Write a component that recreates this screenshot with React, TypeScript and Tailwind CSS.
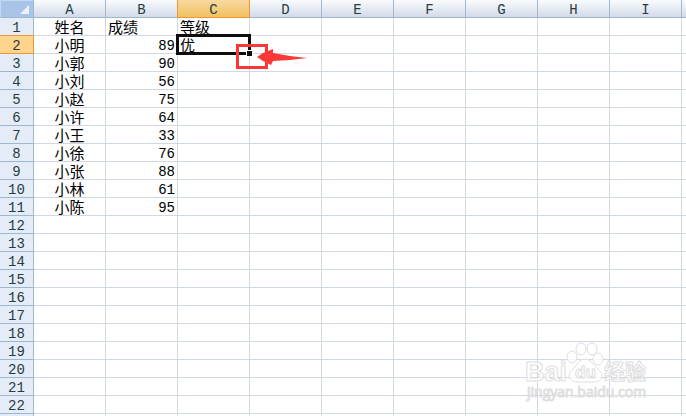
const columns = ["A", "B", "C", "D", "E", "F", "G", "H", "I", "J"];

const records: [string, string, string][] = [
  ["姓名", "成绩", "等级"],
  ["小明", "89", "优"],
  ["小郭", "90", ""],
  ["小刘", "56", ""],
  ["小赵", "75", ""],
  ["小许", "64", ""],
  ["小王", "33", ""],
  ["小徐", "76", ""],
  ["小张", "88", ""],
  ["小林", "61", ""],
  ["小陈", "95", ""],
];

const rowCount = 23;

function Selection() {
  return (
    <div className="absolute inset-0 z-10">
      <span className="absolute -top-0.5 -left-0.5 h-[21px] w-[75px] border-3 border-[#100e0c]" />
      <span className="absolute top-3.5 left-[68px] size-[7px] border border-white bg-[#100e0c]" />
      <span className="absolute top-2 left-[58px] h-[25px] w-8 border-3 border-[#fb3838]" />
      <svg viewBox="0 0 50 18" className="absolute top-3 left-[79px] h-[18px] w-[50px]" aria-hidden="true">
        <path d="M0 9 6 5 16 1 16 5 33 8 50 10 33 12 16 13 14 17 6 13Z" fill="#fb3838" />
      </svg>
    </div>
  );
}

function Watermark() {
  return (
    <svg
      viewBox="0 0 124 62"
      className="absolute top-[341px] left-[525px] h-[62px] w-[124px]"
      fill="#ffffff"
      fillOpacity="0.75"
      stroke="#dedede"
      aria-hidden="true"
    >
      <ellipse cx="47" cy="16" rx="5" ry="6" />
      <ellipse cx="56" cy="8" rx="5" ry="6" />
      <ellipse cx="67" cy="8" rx="5" ry="6" />
      <ellipse cx="73" cy="18" rx="5" ry="6" />
      <path d="M60 18c-6 0-8 6-12 10-7 6-3 13 4 13h17c8 0 11-7 4-13-5-4-7-10-13-10Z" />
      <text x="0" y="40" fontSize="27" fontFamily="Liberation Sans, sans-serif" fontWeight="700">Bai</text>
      <text x="50" y="37" fontSize="17" fontFamily="Liberation Sans, sans-serif" fontWeight="700">du</text>
      <text x="79" y="38" fontSize="21" fontFamily="Noto Sans CJK SC, sans-serif" fontWeight="700">经验</text>
      <text x="2" y="56" fontSize="14" fontFamily="Open Sans, sans-serif" fontWeight="400">jingyan.baidu.com</text>
    </svg>
  );
}

export default function App() {
  return (
    <main className="relative h-screen w-full overflow-hidden bg-white font-['Liberation_Mono','Noto_Sans_CJK_SC',monospace] text-sm leading-[14px] text-black">
      <table className="w-[754px] table-fixed border-separate border-spacing-0">
        <colgroup>
          <col className="w-[34px]" />
          {columns.map((name) => (
            <col key={name} className="w-[72px]" />
          ))}
        </colgroup>
        <thead>
          <tr className="h-[18px]">
            <td className="border-r border-b border-[#9eb6ce] bg-[#a9c4e9] p-0">
              <svg viewBox="0 0 33 17" className="block h-[17px] w-[33px]" aria-hidden="true">
                <path d="M0.5 17V0.5H33" fill="none" stroke="#c3d8f3" />
                <path d="M29 5v9H20Z" fill="#eef1f8" />
              </svg>
            </td>
            {columns.map((name) => (
              <th
                key={name}
                scope="col"
                className={
                  name === "C"
                    ? "border-r border-b border-[#f29536] bg-linear-to-b from-[#f8d99f] to-[#f1c15f] px-0 pt-[3px] pb-0 font-normal text-[#273c40]"
                    : name === "B"
                      ? "border-r border-b border-r-[#f29536] border-b-[#9eb6ce] bg-linear-to-b from-[#f9fbfd] to-[#d3dbe9] px-0 pt-[3px] pb-0 font-normal text-[#273c40]"
                      : "border-r border-b border-[#9eb6ce] bg-linear-to-b from-[#f9fbfd] to-[#d3dbe9] px-0 pt-[3px] pb-0 font-normal text-[#273c40]"
                }
              >
                {name}
              </th>
            ))}
          </tr>
        </thead>
        <tbody>
          {Array.from({ length: rowCount }, (_, row) => {
            const record = records[row] ?? ["", "", ""];
            return (
              <tr key={row} className="h-[18px]">
                <th
                  scope="row"
                  className={
                    row === 1
                      ? "border-r border-b border-[#f29536] bg-[#ffd58d] px-0 pt-[3px] pb-0 font-normal text-[#273c40]"
                      : row === 0
                        ? "border-r border-b border-r-[#9eb6ce] border-b-[#f29536] bg-[#e4ecf7] px-0 pt-[3px] pb-0 font-normal text-[#273c40]"
                        : "border-r border-b border-[#9eb6ce] bg-[#e4ecf7] px-0 pt-[3px] pb-0 font-normal text-[#273c40]"
                  }
                >
                  {row + 1}
                </th>
                {columns.map((name, column) => (
                  <td
                    key={name}
                    className={
                      column === 0
                        ? "border-r border-b border-[#d0d7e5] px-0 py-px text-center"
                        : column === 1 && row > 0
                          ? "border-r border-b border-[#d0d7e5] px-0.5 pt-[3px] pb-0 text-right"
                          : row === 1 && name === "C"
                            ? "relative border-r border-b border-[#d0d7e5] px-0.5 py-px text-left"
                            : "border-r border-b border-[#d0d7e5] px-0.5 py-px text-left"
                    }
                  >
                    {column === 1 && row > 0 ? (
                      record[1]
                    ) : (
                      <span className="block font-['Noto_Sans_CJK_SC',sans-serif] text-[15px] leading-[15px]">
                        {record[column]}
                      </span>
                    )}
                    {row === 1 && name === "C" && <Selection />}
                  </td>
                ))}
              </tr>
            );
          })}
        </tbody>
      </table>
      <Watermark />
    </main>
  );
}
